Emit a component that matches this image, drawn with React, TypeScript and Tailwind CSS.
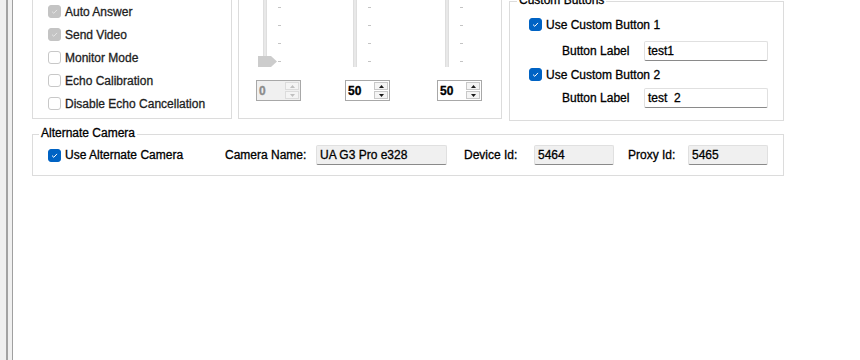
import React from 'react'

type BoxState = 'on' | 'off' | 'dim'

function Check({ state }: { state: BoxState }) {
  const box =
    state === 'on'
      ? 'bg-[#0063c4] border-[#0063c4]'
      : state === 'dim'
      ? 'bg-[#c4c4c4] border-[#c4c4c4]'
      : 'bg-white border-[#c8c8c8]'
  return (
    <div className={`flex h-[13px] w-[13px] shrink-0 items-center justify-center rounded-[3px] border ${box}`}>
      {state !== 'off' && (
        <svg width="9" height="9" viewBox="0 0 9 9">
          <path d="M2 4.6 L3.8 6.3 L7 2.9" fill="none" stroke={state === 'on' ? '#ffffff' : '#e4e4e4'} strokeWidth="1" />
        </svg>
      )}
    </div>
  )
}

function CheckRow({ state, label }: { state: BoxState; label: string }) {
  return (
    <div className="flex h-[23px] items-center">
      <Check state={state} />
      <span className="ml-[4px] text-[#1e1e1e]">{label}</span>
    </div>
  )
}

function Slider({ thumb }: { thumb?: boolean }) {
  // track + tick marks + optional thumb
  return (
    <svg width="30" height="80" className="block">
      <rect x="7" y="0" width="4" height="67" fill="#dedede" />
      <rect x="8" y="0" width="2" height="67" fill="#e8e8e8" />
      {[7, 25, 43, 61].map((y) => (
        <rect key={y} x="22" y={y} width="3" height="1" fill="#c4c4c4" />
      ))}
      {thumb && <path d="M2 56 H15 L21 61.5 L15 67 H2 Z" fill="#cccccc" />}
    </svg>
  )
}

function Spin({ value, disabled }: { value: string; disabled?: boolean }) {
  const arrow = disabled ? '#c0c0c0' : '#1a1a1a'
  return (
    <div
      className={`flex h-[21px] w-[45px] items-center border border-[#a8a8a8] ${
        disabled ? 'bg-[#f0f0f0] text-[#8c8c8c]' : 'bg-white text-black'
      }`}
    >
      <span className="ml-[2px] flex-1 font-bold leading-none">{value}</span>
      <div className="mr-[1px] flex h-[17px] w-[14px] flex-col gap-[1px]">
        <div className={`flex flex-1 items-center justify-center border ${disabled ? 'border-[#dcdcdc]' : 'border-[#c8c8c8]'} bg-[#f4f4f4]`}>
          <svg width="5" height="3" viewBox="0 0 5 3">
            <path d="M0 3 L2.5 0 L5 3 Z" fill={arrow} />
          </svg>
        </div>
        <div className={`flex flex-1 items-center justify-center border ${disabled ? 'border-[#dcdcdc]' : 'border-[#c8c8c8]'} bg-[#f4f4f4]`}>
          <svg width="5" height="3" viewBox="0 0 5 3">
            <path d="M0 0 L2.5 3 L5 0 Z" fill={arrow} />
          </svg>
        </div>
      </div>
    </div>
  )
}

function Field({ value, width, readOnly }: { value: string; width: string; readOnly?: boolean }) {
  return (
    <div
      className={`flex h-[20px] items-center rounded-[2px] border border-[#e0e0e0] border-b-[#8a8a8a] pl-[3px] ${width} ${
        readOnly ? 'bg-[#f0f0f0]' : 'bg-white'
      }`}
    >
      <span className="whitespace-pre text-black">{value}</span>
    </div>
  )
}

export default function App() {
  return (
    <div className="flex h-[360px] w-[860px] overflow-hidden bg-white font-['Liberation_Sans',Arial,sans-serif] text-[12px] leading-[14px] text-black [-webkit-text-stroke:0.3px_currentColor]">
      <div className="flex h-full w-[13px] shrink-0">
        <div className="w-[6px] bg-[#f0f0f0]" />
        <div className="w-[2px] bg-[#a3a3a3]" />
        <div className="w-[4px] bg-[#f0f0f0]" />
        <div className="w-[1px] bg-[#a0a0a0]" />
      </div>

      <div className="pl-[19px]">
        <div className="flex items-start">
          {/* Call options */}
          <div className="h-[119px] w-[200px] border-x border-b border-[#dcdcdc] pl-[15px]">
            <CheckRow state="dim" label="Auto Answer" />
            <CheckRow state="dim" label="Send Video" />
            <CheckRow state="off" label="Monitor Mode" />
            <CheckRow state="off" label="Echo Calibration" />
            <CheckRow state="off" label="Disable Echo Cancellation" />
          </div>

          {/* Levels */}
          <div className="ml-[6px] flex h-[119px] w-[264px] border-x border-b border-[#dcdcdc] pl-[17px]">
            <div className="flex flex-col">
              <Slider thumb />
              <Spin value="0" disabled />
            </div>
            <div className="ml-[44px] flex flex-col">
              <div className="pl-[1px]">
                <Slider />
              </div>
              <Spin value="50" />
            </div>
            <div className="ml-[47px] flex flex-col">
              <div className="pl-[1px]">
                <Slider />
              </div>
              <Spin value="50" />
            </div>
          </div>

          {/* Custom Buttons */}
          <div className="relative ml-[7px] mt-[1px] h-[120px] w-[275px] border border-[#dcdcdc] pl-[19px] pt-[16px]">
            <span className="absolute -top-[9px] left-[7px] bg-white px-[2px]">Custom Buttons</span>
            <div className="flex h-[13px] items-center">
              <Check state="on" />
              <span className="ml-[4px]">Use Custom Button 1</span>
            </div>
            <div className="mt-[10px] flex items-center">
              <span className="ml-[33px] w-[82px]">Button Label</span>
              <Field value="test1" width="w-[124px]" />
            </div>
            <div className="mt-[7px] flex h-[13px] items-center">
              <Check state="on" />
              <span className="ml-[4px]">Use Custom Button 2</span>
            </div>
            <div className="mt-[7px] flex items-center">
              <span className="ml-[33px] w-[82px]">Button Label</span>
              <Field value="test  2" width="w-[124px]" />
            </div>
          </div>
        </div>

        {/* Alternate Camera */}
        <div className="relative mt-[13px] flex h-[42px] w-[752px] items-center border border-[#dcdcdc] pl-[15px]">
          <span className="absolute -top-[9px] left-[6px] bg-white px-[2px]">Alternate Camera</span>
          <Check state="on" />
          <span className="ml-[4px] w-[160px]">Use Alternate Camera</span>
          <span className="w-[91px]">Camera Name:</span>
          <Field value="UA G3 Pro e328" width="w-[131px]" readOnly />
          <span className="ml-[17px] w-[70px]">Device Id:</span>
          <Field value="5464" width="w-[80px]" readOnly />
          <span className="ml-[14px] w-[60px]">Proxy Id:</span>
          <Field value="5465" width="w-[80px]" readOnly />
        </div>
      </div>
    </div>
  )
}
